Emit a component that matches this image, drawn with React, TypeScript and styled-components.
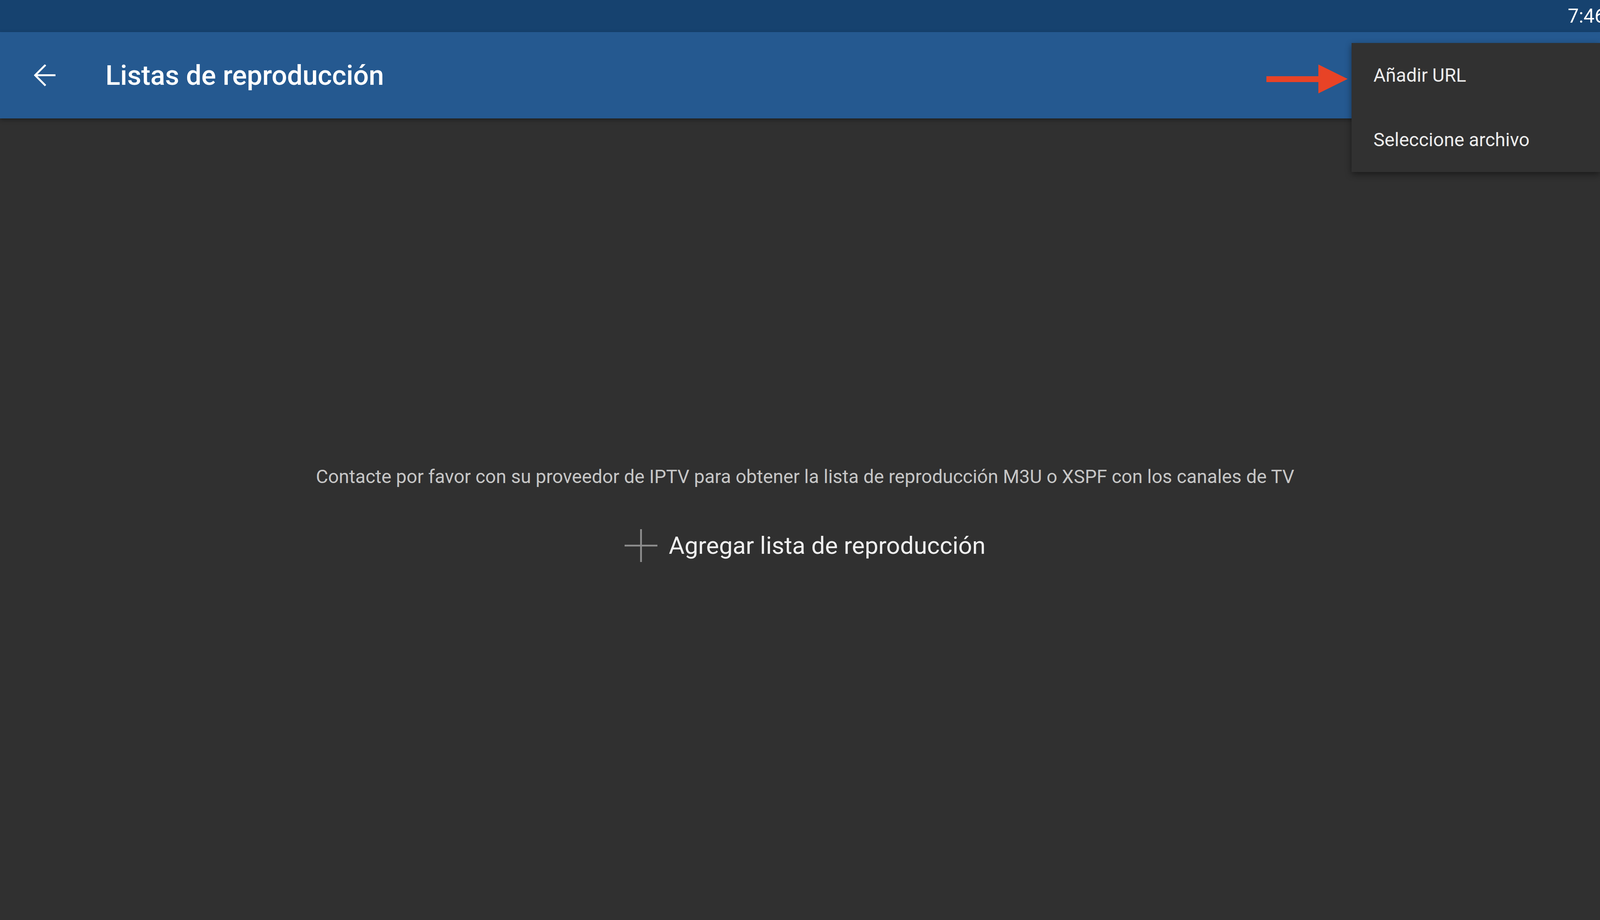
import React from 'react';
import styled, { createGlobalStyle } from 'styled-components';

const GlobalStyle = createGlobalStyle`
  html, body {
    margin: 0;
    padding: 0;
    background: #303030;
  }
  body {
    font-family: Roboto, 'Noto Sans', 'Liberation Sans', sans-serif;
  }
`;

const Screen = styled.div`
  position: relative;
  width: 100%;
  height: 2354px;
  overflow: hidden;
  display: flex;
  flex-direction: column;
  background: #303030;
`;

const StatusBar = styled.div`
  flex-shrink: 0;
  height: 82px;
  display: flex;
  align-items: center;
  justify-content: flex-end;
  overflow: hidden;
  background: #16426f;
`;

const Clock = styled.span`
  margin-right: -14px;
  font-size: 50px;
  line-height: 1;
  color: #ffffff;
  white-space: nowrap;
`;

const Toolbar = styled.header`
  position: relative;
  z-index: 1;
  flex-shrink: 0;
  height: 221px;
  display: flex;
  align-items: center;
  gap: 127px;
  padding-left: 87px;
  background: #255990;
  box-shadow: 0 4px 10px rgba(0, 0, 0, 0.35);
`;

const BackButton = styled.button`
  display: flex;
  padding: 0;
  border: 0;
  background: none;
  cursor: pointer;
`;

const Title = styled.h1`
  margin: 0;
  font-size: 70px;
  font-weight: 500;
  line-height: 1;
  color: #ffffff;
`;

const Content = styled.main`
  flex: 1;
  display: flex;
  flex-direction: column;
  align-items: center;
  padding: 889px 0 0 26px;
`;

const Hint = styled.p`
  margin: 0;
  font-size: 48px;
  line-height: 56px;
  color: #c6c6c6;
  white-space: nowrap;
`;

const AddButton = styled.button`
  display: flex;
  align-items: center;
  gap: 29px;
  margin-top: 106px;
  padding: 0;
  border: 0;
  background: none;
  font-family: inherit;
  font-size: 62px;
  line-height: 74px;
  color: #f0f0f0;
  cursor: pointer;
`;

// overflow menu hangs from the right edge, over the toolbar
const Menu = styled.ul`
  position: absolute;
  top: 110px;
  right: 0;
  width: 636px;
  z-index: 2;
  margin: 0;
  padding: 0;
  list-style: none;
  background: #313131;
  box-shadow: 0 6px 16px rgba(0, 0, 0, 0.45);
`;

const MenuItem = styled.li`
  height: 165px;
  display: flex;
  align-items: center;
  padding-left: 56px;
  font-size: 48px;
  color: #ececec;
  white-space: nowrap;
`;

// red annotation arrow pointing at the first menu entry
const Pointer = styled.svg`
  position: absolute;
  top: 165px;
  right: 646px;
  z-index: 3;
`;

const BackIcon = () => (
  <svg width="56" height="56" viewBox="0 0 56 56" fill="none">
    <path
      d="M55 27.5H3M29.5 1L3 27.5 29.5 54"
      stroke="#ffffff"
      strokeWidth="5"
      strokeLinecap="butt"
      strokeLinejoin="miter"
    />
  </svg>
);

const PlusIcon = () => (
  <svg width="84" height="84" viewBox="0 0 84 84">
    <path d="M42 0V84M0 42H84" stroke="#8e8e8e" strokeWidth="4.5" />
  </svg>
);

export default function App() {
  return (
    <>
      <GlobalStyle />
      <Screen>
        <StatusBar>
          <Clock>7:46</Clock>
        </StatusBar>
        <Toolbar>
          <BackButton aria-label="Atrás">
            <BackIcon />
          </BackButton>
          <Title>Listas de reproducción</Title>
        </Toolbar>
        <Content>
          <Hint>
            Contacte por favor con su proveedor de IPTV para obtener la lista de reproducción M3U o
            XSPF con los canales de TV
          </Hint>
          <AddButton>
            <PlusIcon />
            Agregar lista de reproducción
          </AddButton>
        </Content>
        <Menu>
          <MenuItem>Añadir URL</MenuItem>
          <MenuItem>Seleccione archivo</MenuItem>
        </Menu>
        <Pointer width="208" height="74" viewBox="0 0 208 74">
          <path d="M0 30H133V0L208 37 133 74V45H0Z" fill="#e84326" />
        </Pointer>
      </Screen>
    </>
  );
}
